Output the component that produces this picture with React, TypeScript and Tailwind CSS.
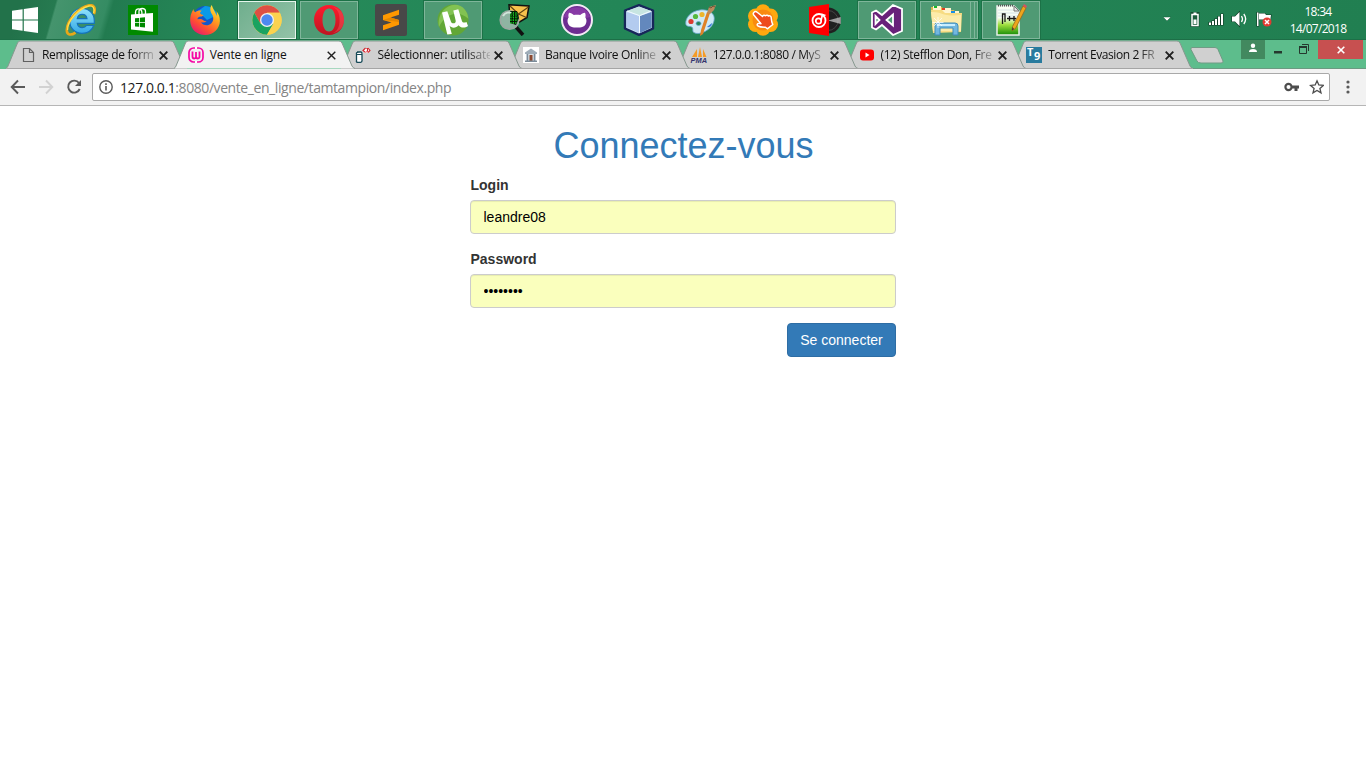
import type { ReactNode } from "react";

const ui = "font-['Open_Sans','Noto_Sans',sans-serif]";

function Icon({ children, size = 32 }: { children: ReactNode; size?: number }) {
  return (
    <svg width={size} height={size} viewBox={`0 0 ${size} ${size}`} className="block shrink-0">
      {children}
    </svg>
  );
}

const WindowsLogo = () => (
  <svg width="28" height="26" viewBox="0 0 28 26" className="block">
    <path d="M1 3.8 11.6 2.3V12.4H1ZM12.8 2.1 27 0V12.4H12.8ZM1 13.6H11.6V23.7L1 22.2ZM12.8 13.6H27V26L12.8 23.9Z" fill="#fff" />
  </svg>
);

const Explorer = () => (
  <Icon>
    <defs>
      <linearGradient id="ie" x1="0" y1="0" x2="0" y2="1"><stop offset="0" stopColor="#8fe2fb" /><stop offset="1" stopColor="#35a9e6" /></linearGradient>
    </defs>
    <path fillRule="evenodd" d="M17 4.500C24.500 4.500 29.300 10 29.300 16.500V19.300H12.300C12.800 22 14.600 23.600 17.300 23.600C19.200 23.600 20.600 22.900 21.500 21.500H28.700C27 26.500 22.500 29.300 17 29.300C9.500 29.300 4.700 24 4.700 17C4.700 10 9.600 4.500 17 4.500ZM12.300 14.700H22C21.700 12 19.900 10.300 17.200 10.300C14.500 10.300 12.700 12 12.300 14.700Z" fill="url(#ie)" stroke="#1673b8" strokeWidth="1.200" />
    <path d="M29 10C31 4 29 .5 24 1.300 14 3 1.500 17 1.800 26.500c.1 4.500 4 5.300 8.700 2.100" fill="none" stroke="#e9a817" strokeWidth="2.600" />
    <path d="M28.600 9C30 4 28 1.300 24 2 14 4.200 2 17 2.500 26" fill="none" stroke="#ffdf4c" strokeWidth="1.300" />
  </Icon>
);

const Store = () => (
  <Icon>
    <path d="M1 1H31V31H1Z" fill="#008a00" />
    <path d="M4 10.500 26 9v18.800L4 25.500Z" fill="#fff" />
    <path d="M8.500 11V8.500a3.200 3.600 0 0 1 6.400 0V10M12 10V7.500c0-4 6.500-4 6.500 0V10" fill="none" stroke="#fff" strokeWidth="1.300" />
    <path d="m8 14.300 4.200-.4v4.100H8Zm5-.5 5-.5v4.700h-5ZM8 18.800h4.200v4L8 22.400Zm5 0h5v4.600l-5-.5Z" fill="#008a00" />
  </Icon>
);

const Firefox = () => (
  <Icon>
    <defs>
      <linearGradient id="ff" x1=".9" y1="0" x2=".2" y2="1">
        <stop offset="0" stopColor="#fff044" /><stop offset=".35" stopColor="#ffa51e" /><stop offset=".7" stopColor="#ff4f32" /><stop offset="1" stopColor="#e31576" />
      </linearGradient>
    </defs>
    <circle cx="16" cy="14.500" r="12.500" fill="#1457c9" />
    <path d="M16 2c6 0 11 4 12.500 9L18 16 9 7Z" fill="#0a9ae8" />
    <path d="M4.500 5C2 9 1 13 1.200 17 1.600 25.500 8 31 16 31s14.700-6 14.900-14c.1-4-1.300-7.500-3.400-9.700.5 2.200.4 3.500.2 4.500C26 7.500 23.500 4 22.700 1c-2.200 3-1.500 6.500.3 9.300 2 3.200 1.600 7-.8 9.200-3.500 3.200-9 1.500-10-1.300 2 .6 3.800.2 5.500-1-2.700.3-4-1.500-5.700-2.200l-3.600.2c.4-1.500 1.500-2.400 3.400-2.600 1.500 0 2.200-.6 2.700-1.500-1.800-.3-3.300-1.300-3.500-2.300l1.600-2.200C9.300 6.500 7.500 7 6.300 8.200 5 7.500 4.600 6.500 4.500 5Z" fill="url(#ff)" />
  </Icon>
);

const Chrome = () => (
  <Icon>
    <circle cx="16" cy="16" r="14.700" fill="#fbd24f" />
    <path d="M3.270 8.650A14.700 14.700 0 0 1 28.730 8.650H16L9.600 19.700Z" fill="#dd4f43" />
    <path d="M3.270 8.650A14.700 14.700 0 0 0 16 30.700L22.400 19.700H9.600Z" fill="#1aa260" />
    <path d="M16 8.650H28.730A14.700 14.700 0 0 1 16 30.700L22.400 19.700Z" fill="#fbd24f" />
    <circle cx="16" cy="16" r="7" fill="#f1f1f1" />
    <circle cx="16" cy="16" r="5.700" fill="#4c89f0" />
  </Icon>
);

const Opera = () => (
  <Icon>
    <defs><linearGradient id="op" x1="0" y1="0" x2="0" y2="1"><stop offset="0" stopColor="#ff1b2d" /><stop offset="1" stopColor="#bd1622" /></linearGradient></defs>
    <path fillRule="evenodd" d="M16 1C7.500 1 1 7.500 1 16s6.500 15 15 15 15-6.500 15-15S24.500 1 16 1Zm0 3.500c4 0 6.500 4.800 6.500 11.500S20 27.500 16 27.500 9.500 22.700 9.500 16 12 4.500 16 4.500Z" fill="url(#op)" />
    <path d="M20 3c5 2 6.500 7 6.500 13S25 27 20 29c6-1 11-6 11-13S26 4 20 3Z" fill="#f25b62" opacity=".45" />
  </Icon>
);

const Sublime = () => (
  <Icon>
    <rect width="32" height="32" rx="2" fill="#484848" />
    <path d="M8 11.200 24 5.800v5L15.500 13.500 24 16v4.800L8 26.200V21.200L16.500 18.500 8 15.900Z" fill="#ff9800" />
    <path d="m8 15.900 7.500-2.400L24 16v2Z" fill="#e58600" />
  </Icon>
);

const Torrent = () => (
  <Icon>
    <circle cx="16" cy="16" r="15.500" fill="#62a736" />
    <path d="M2 23C0 11 8 1 18 .7c8 0 13 7 13.400 14C20 5 8 11 2 23Z" fill="#82c252" />
    <path d="M5 8.500 10.300 7.200 14 17.700c.9 2.600 5.300 2 4.700-.9L16.300 6.500l5-1.300 3.700 12c.5 1.400 2 1.800 4.500.8L31 22c-3 2.200-7.500 2.300-9.300-.7-2.800 3.200-7.400 3-9.200.3l2.300 8.400-4.500.5Z" fill="#fff" />
  </Icon>
);

const MailSearch = () => (
  <Icon>
    <path d="M10 .8 30 2 28 13.500 19 19 11 15Z" fill="#f8c24c" stroke="#111" strokeWidth="1.500" />
    <path d="m11 2 8.500 8L29.500 3M18 18l1.500-8 8 3.500" fill="none" stroke="#614313" strokeWidth="1.200" />
    <path d="m17 23 7 8" stroke="#111" strokeWidth="3.500" />
    <circle cx="10.500" cy="16" r="9.300" fill="#8fb4a2" stroke="#9da8a2" strokeWidth="1.600" />
    <path d="M11 7h7l2 7-3 7-6-2Z" fill="#051b06" />
    <path d="M12 8v11M14.500 8v12M17 8v12M11 10h8M11 13h8M11 16h8M11 19h6" stroke="#19d324" strokeWidth=".9" strokeDasharray="1.500 1" />
    <path d="M4 12c2-4 7-4 8-3" stroke="#d2e5da" fill="none" strokeWidth="2" />
  </Icon>
);

const GitHubDesktop = () => (
  <Icon>
    <circle cx="16" cy="16" r="15" fill="#6d2d91" stroke="#f3eaf5" strokeWidth="2" />
    <path d="M3 13C6 0 26 0 29 13L16 17Z" fill="#873aa5" />
    <path d="M8 8.800c1.900 0 3.600 1.200 4.800 2.100 2.100-.3 4.300-.3 6.400 0 1.200-.9 2.900-2.100 4.800-2.100.7 1.800.8 3 .3 4.500 1.700 2.300 1.400 5 .2 7.200-1.400 2.300-4 2.900-5.500 2.900h-6c-1.500 0-4.100-.6-5.500-2.900-1.200-2.200-1.500-4.900.2-7.200-.5-1.500-.4-2.700.3-4.500Z" fill="#fff" />
  </Icon>
);

const Cube = () => (
  <Icon>
    <path d="M16 1.200 30 6.500v18L16 30.800 2 24.500v-18Z" fill="#cce2f5" stroke="#17265a" strokeWidth="2.400" strokeLinejoin="round" />
    <path d="M4 7 16 2.800 28 7l-11 4Z" fill="#c7e5e1" />
    <path d="m3.500 8 13 4v17l-13-6Z" fill="#b3cbef" />
    <path d="m17 12 11.500-4v15.500L17 29Z" fill="#6388bd" />
    <path d="m4 7 12.500 4.700L28 7M16.500 12v17" fill="none" stroke="#f2fbff" />
  </Icon>
);

const Paint = () => (
  <Icon>
    <path fillRule="evenodd" d="M15 6C6 7 0 14 .8 20c.5 3 4 2 6 3 2 1.500 0 4 2 5.500C14 32 27 26 29 17c2-8-6-12-14-11Zm1 13.500a2.500 2 0 1 1-5 0 2.500 2 0 0 1 5 0Z" fill="#cfeaf6" stroke="#6aa6cc" strokeWidth=".8" />
    <circle cx="6" cy="17.500" r="2.600" fill="#dc3b32" /><circle cx="10.500" cy="12.500" r="2.600" fill="#55b93e" /><circle cx="17" cy="10.500" r="2.600" fill="#edb52c" /><path d="M22 23a4 4 0 0 0 5-4Z" fill="#3478d8" />
    <path d="m25 9-7 21-3 2 1-6 6-18Z" fill="#df8228" />
    <path d="m22 9 2-6 7-2-2 5-4 4Z" fill="#b98b5d" /><path d="m24 3 2 1 2-2 2 1" stroke="#735438" fill="none" />
  </Icon>
);

const Touch = () => (
  <Icon>
    <g fill="#ffa80f"><circle cx="16" cy="7.800" r="7.500" /><circle cx="23.500" cy="12" r="7.500" /><circle cx="23.500" cy="20.500" r="7.500" /><circle cx="16" cy="24.300" r="7.500" /><circle cx="8.500" cy="20.500" r="7.500" /><circle cx="8.500" cy="12" r="7.500" /></g>
    <circle cx="16" cy="16" r="10.500" fill="#f98a10" />
    <path d="M7 8.200c1-1.200 2.500-.5 3.500.3l5 4c.5-1.500 2-1.500 3-.7.800-1 2.300-.8 3 .2 1-.6 2.300 0 2.600 1l.7 5 1 2.500-5.500 4.300-1.800-1.600c-3 .1-5.500-.2-7.500-1.200-1.500-1-.7-2.700 1-2.500l2 .2L6.800 11c-.7-1-.6-2.100.2-2.800Z" fill="#ee4a1c" stroke="#fff" strokeWidth="1.500" strokeLinejoin="round" />
  </Icon>
);

const Vinyl = () => (
  <Icon>
    <circle cx="19" cy="16.500" r="13" fill="#202020" />
    <circle cx="19" cy="16.500" r="10" fill="none" stroke="#444" />
    <path d="m19 16.500 12.800-3.500v7Z" fill="#bbb" opacity=".8" />
    <path d="M0 3 20 0v32L0 29Z" fill="#f00" />
    <circle cx="10" cy="16.500" r="6.500" fill="none" stroke="#fff" strokeWidth="1.800" />
    <circle cx="9.500" cy="17" r="2.700" fill="none" stroke="#fff" strokeWidth="1.700" /><path d="m12 16.500 1.500-6 3 1" fill="none" stroke="#fff" strokeWidth="1.700" />
  </Icon>
);

const VisualStudio = () => (
  <Icon>
    <path fillRule="evenodd" d="M22 1 31 4.800V27l-9 4-11-10-6 4.500-4-2V8.500l4-2 6 4.500ZM22 10.500 15.500 16 22 21.500ZM4.500 12v8L8.500 16Z" fill="#68217a" stroke="#fff" strokeWidth="1.800" />
  </Icon>
);

const Folder = () => (
  <Icon>
    <path d="M1 3h11l2 3h10l2 3h4v18L3 28Z" fill="#e1b94d" />
    <path d="M3 2h8v5H3ZM12 4h9v5h-9ZM21 7h8v4h-8Z" fill="#fff5d0" />
    <path d="M4 2h3v2H4Z" fill="#15b82c" /><path d="M12 4h3v2h-3Z" fill="#e33c22" /><path d="M21 7h4v2h-4Z" fill="#178ee7" />
    <path d="M1 6h11l3 3h17l-1 19-28 1Z" fill="#f7dc83" /><path d="M1 8c10-1 11 5 30 3v16H3Z" fill="#fcebaa" />
    <path d="M5 31V21q0-2 2-2h18q3 0 3 3v9h-5v-7H10v7Z" fill="#72b7df" stroke="#3e8cba" />
    <path d="M7 21h18" stroke="#c7edff" strokeWidth="2" /><path d="M8 13v11M2.500 18.500h11M4 14l8 8m0-8-8 8" stroke="#fff" strokeWidth=".7" />
  </Icon>
);

const Notepad = () => (
  <Icon>
    <defs><linearGradient id="np" x1="0" y1="0" x2="0" y2="1"><stop offset=".4" stopColor="#f8fff4" /><stop offset=".65" stopColor="#9ede3c" /><stop offset="1" stopColor="#168c08" /></linearGradient></defs>
    <path d="M2 2h17l5 5v24H2Z" fill="url(#np)" stroke="#e9eee9" strokeWidth="1.500" />
    <path d="M3 1.500h16" stroke="#555" strokeWidth="2" strokeDasharray="1 1" /><path d="m19 2 5 5h-5Z" fill="#e6e6e6" stroke="#777" />
    <path d="M3 6h15M3 9h20M3 12h20" stroke="#c8d7e3" strokeWidth=".7" />
    <path d="M7.500 20V10H10v8M12 14.500h5M14.500 12v5M17 14.500h4M19 12v5" fill="none" stroke="#181818" strokeWidth="1.300" />
    <path d="M28 2 17.500 22.500l-.5 4 3.500-2L31 4Z" fill="#eea51d" stroke="#946017" strokeWidth=".7" />
    <path d="m28 2 1-2 3 2-1 2Z" fill="#d65261" /><path d="m17.500 23-.5 3.500 2-1.500" fill="#333" />
  </Icon>
);

const apps = [
  { name: "Internet Explorer", icon: <Explorer />, state: "" },
  { name: "Store", icon: <Store />, state: "" },
  { name: "Firefox", icon: <Firefox />, state: "" },
  { name: "Chrome", icon: <Chrome />, state: "active" },
  { name: "Opera", icon: <Opera />, state: "open" },
  { name: "Sublime Text", icon: <Sublime />, state: "" },
  { name: "µTorrent", icon: <Torrent />, state: "open" },
  { name: "Mail", icon: <MailSearch />, state: "" },
  { name: "GitHub", icon: <GitHubDesktop />, state: "" },
  { name: "VirtualBox", icon: <Cube />, state: "" },
  { name: "Paint", icon: <Paint />, state: "" },
  { name: "Touch", icon: <Touch />, state: "" },
  { name: "Music", icon: <Vinyl />, state: "" },
  { name: "Visual Studio", icon: <VisualStudio />, state: "open" },
  { name: "Files", icon: <Folder />, state: "stack" },
  { name: "Notepad++", icon: <Notepad />, state: "open" },
];

const frames: Record<string, string> = {
  "": "",
  active: "border border-[#e5f5ec] bg-[linear-gradient(135deg,#6fae8d,#93c3a8)] outline outline-[#16683f]",
  open: "border border-[#7fb69a] bg-[#4f9a74] outline outline-[#1c7247]",
  stack: "border border-[#7fb69a] bg-[#4f9a74] outline outline-[#1c7247]",
};

function Tray() {
  return (
    <div className="mr-[18px] ml-auto flex h-10 items-center">
      <svg width="112" height="20" viewBox="0 0 112 20" className="mt-[-2px] block">
        <path d="M3 8h8l-4 4Z" fill="#fff" stroke="#155f3b" strokeWidth=".5" />
        <path d="M30.500 3h9v15h-9Z" fill="#123d28" opacity=".75" />
        <path d="M32 5.500h6v11h-6Z" fill="#1c5c3c" stroke="#fff" strokeWidth="1.500" /><path d="M33.500 3.500h3v1.500h-3ZM33.500 10.500h3V15h-3Z" fill="#fff" />
        <g stroke="#123d28" strokeWidth="1.200" paintOrder="stroke" fill="#fff">
          <path d="M49 13.500h2V16h-2ZM52 12h2v4h-2ZM55 10h2v6h-2ZM58 7.500h2V16h-2ZM61 5h2v11h-2Z" />
          <path d="M72 7.500h3l4.500-4.500v14L75 12.500h-3Z" />
          <path d="M97 3.500h1.500V17H97ZM99 4.500h6l1 1.500h5l-1 7h-5l-1-2.500h-5Z" />
        </g>
        <path d="M81.500 7q2 3 0 6M83.800 5q3.700 5 0 10" fill="none" stroke="#fff" strokeWidth="1.300" />
        <circle cx="107" cy="13" r="4.500" fill="#e13b32" /><path d="m105 11 4 4m0-4-4 4" stroke="#fff" strokeWidth="1.500" />
      </svg>
      <div className={`${ui} ml-[16px] w-[60px] pb-px text-center text-[12px] leading-[17px] tracking-[-0.7px] text-white`}>
        <div>18:34</div>
        <div className="whitespace-nowrap">14/07/2018</div>
      </div>
    </div>
  );
}

function Taskbar() {
  return (
    <div className="flex h-10 border-b border-[#1d6f47] bg-[linear-gradient(106deg,#22724a_20px,#267a50_54px,#45946d_56px,#358c63_104px,#227b50_110px,#268a59_230px,#238657_600px,#217f51_1324px)]">
      <div className="flex h-[39px] w-[52px] items-center pl-[11px]">
        <WindowsLogo />
      </div>
      <div className="flex gap-1 pt-px">
        {apps.map((a) => (
          <div key={a.name} title={a.name} className={`flex h-[38px] w-[58px] items-center ${a.state === "stack" ? "" : "justify-center"} ${frames[a.state]}`}>
            {a.state === "stack" ? (
              <>
                <div className="flex h-full w-[50px] items-center justify-center border-r border-[#7fb69a]">{a.icon}</div>
                <div className="h-full w-[4px] border-r border-[#7fb69a]" />
              </>
            ) : (
              a.icon
            )}
          </div>
        ))}
      </div>
      <Tray />
    </div>
  );
}

const tabs = [
  {
    title: "Remplissage de form",
    spacing: "tracking-[-0.32px]",
    icon: <Icon size={16}><path d="M3.500 1.500h6l4 4v9h-10ZM9.500 1.500v4h4" fill="none" stroke="#606060" strokeWidth="1.200" /></Icon>,
  },
  {
    title: "Vente en ligne",
    spacing: "tracking-[-0.18px]",
    icon: <Icon size={16}><rect x="1" y="1" width="14" height="14" rx="4.500" fill="none" stroke="#f509a5" strokeWidth="1.700" /><path d="M4.500 4.500v5q0 2 1.800 2T8 9.500V5v4.500q0 2 1.800 2t1.700-2v-5" fill="none" stroke="#f509a5" strokeWidth="1.800" /><path d="M7 1h2M7 15h2" stroke="#fff" strokeWidth="2" /></Icon>,
  },
  {
    title: "Sélectionner: utilisate",
    spacing: "tracking-[-0.22px]",
    icon: <Icon size={16}><path d="M2 5h4q1 0 1 2v7q0 1.500-3 1.500T1.500 14V7Q1 5 4 5Z" fill="#fff" stroke="#164957" strokeWidth="1.300" /><path d="M2 7.500h5" stroke="#164957" /><path d="M9 2h5v4H9Z" fill="#fff" /><path d="m10.500 1-2.500 2.500 2.500 2M13 1l2 2.500-2 2M11.500 1.500h1v2l-.5 1v1" fill="none" stroke="#d5262f" strokeWidth="1.100" /></Icon>,
  },
  {
    title: "Banque Ivoire Online",
    spacing: "tracking-[-0.35px]",
    icon: <Icon size={16}><path d="M0 0h16v16H0Z" fill="#fff" /><path d="m2 5.500 6-4 6 4v1.500H2Z" fill="#9fadb9" /><path d="M3 7h10v7H3Z" fill="#d4dce2" /><path d="M6.500 8h3v6h-3Z" fill="#8b4931" /><path d="M2 14.300h12M4.500 7v7M11.500 7v7" stroke="#7c8c9a" strokeWidth="1.400" /></Icon>,
  },
  {
    title: "127.0.0.1:8080 / MyS",
    spacing: "tracking-[-0.38px]",
    icon: <svg width="16" height="16" viewBox="0 0 16 16" className="block shrink-0 overflow-visible"><path d="M6 2 1 10h5Zm3-2L7 10h4ZM12 2v8h3.500Z" fill="#f59b27" /><text x="-.5" y="16" textLength="16.500" lengthAdjust="spacingAndGlyphs" className="font-['Liberation_Sans',sans-serif] text-[7px] font-bold italic" fill="#33336d">PMA</text></svg>,
  },
  {
    title: "(12) Stefflon Don, Fre",
    spacing: "tracking-[-0.3px]",
    icon: <Icon size={16}><rect x="1" y="2.500" width="14" height="11" rx="3" fill="#f00" /><path d="m6.500 5.500 4 2.500-4 2.500Z" fill="#fff" /></Icon>,
  },
  {
    title: "Torrent Evasion 2 FR",
    spacing: "tracking-[-0.42px]",
    icon: <Icon size={16}><path d="M0 0h16v16H0Z" fill="#297b9e" /><text x="1" y="9" className="font-['Open_Sans',sans-serif] text-[11px] font-bold" fill="#fff">T</text><text x="8" y="13" className="font-['Open_Sans',sans-serif] text-[11px] font-bold" fill="#fff">9</text></Icon>,
  },
];

const layers = ["z-6", "z-10", "z-5", "z-4", "z-3", "z-2", "z-1"];

function TabStrip() {
  return (
    <div className="isolate flex h-[29px] bg-[#5dbd8c] pl-[6px]">
      {tabs.map((t, i) => {
        const active = i === 1;
        return (
          <div key={t.title} className={`relative -mr-[13.3px] flex h-[29px] w-[181px] shrink-0 items-center pt-px pl-[14px] ${layers[i]}`}>
            <svg width="181" height="29" viewBox="0 0 181 29" className="absolute top-0 left-0">
              <path d="M0 28.500C1 28 1.500 27 2 26L11.500 3Q12.500 1 14 1H165Q167 1 168 3L178 26Q179 28 181 28.500Z" fill={active ? "#f2f2f2" : "#d0d0d0"} />
              <path d="M0 28.500C1 28 1.500 27 2 26L11.500 3Q12.500 1 14 1H165Q167 1 168 3L178 26Q179 28 181 28.500" fill="none" stroke="#87988f" strokeWidth="1" />
              {!active && <path d="M0 28.500H181" stroke="#a5a5a5" />}
            </svg>
            <div className="relative -mt-px">{t.icon}</div>
            <span className={`${ui} relative ml-[6px] w-[113px] text-[12px] leading-4 whitespace-nowrap text-[#111] ${t.spacing} ${active ? "" : "[mask-image:linear-gradient(to_right,#000_80%,rgba(0,0,0,0.15)_100%)]"}`}>
              {t.title}
            </span>
            <svg width="9" height="9" viewBox="0 0 9 9" className="relative ml-[4px] block">
              <path d="m.7.7 7.600 7.600M8.300.7.700 8.300" stroke="#202020" strokeWidth={active ? 1.400 : 1.900} />
            </svg>
          </div>
        );
      })}
      <div className="flex h-[29px] flex-1 border-b border-[#6b9a82] pl-[8px]">
        <svg width="36" height="28" viewBox="0 0 36 28" className="block shrink-0">
          <path d="M4 7.500H27Q29 7.500 30 9.500L35 21Q35.500 23 33 23H13Q10 23 9 21L3 9.500Q2.500 7.500 4 7.500Z" fill="#d0d0d0" stroke="#709c85" />
        </svg>
      </div>
      <div className="flex h-[29px] shrink-0 border-b border-[#6b9a82] pr-[3px]">
        <div className="flex h-[19px] w-6 items-center justify-center bg-[#42895f]">
          <svg width="10" height="10" viewBox="0 0 10 10" className="-mt-[3px]"><circle cx="5" cy="2.700" r="2.200" fill="#fff" /><path d="M1 9q0-3 4-3t4 3Z" fill="#fff" /></svg>
        </div>
        <svg width="53" height="19" viewBox="0 0 53 19" className="block">
          <path d="M9 11h8v2.500H9Z" fill="#25382e" />
          <path d="M34.500 6.500h7v7h-7ZM37 4.500h6.500V11" fill="none" stroke="#25382e" />
          <path d="M34 6h8v2h-8Z" fill="#25382e" />
        </svg>
        <div className="flex h-[19px] w-[45px] items-center justify-center bg-[#c75050]">
          <svg width="8" height="8" viewBox="0 0 8 8"><path d="m.7.7 6.600 6.600M7.300.7.700 7.300" stroke="#fff" strokeWidth="1.600" /></svg>
        </div>
      </div>
    </div>
  );
}

function Toolbar() {
  return (
    <div className="flex h-[37px] items-center border-b border-[#b6b6b6] bg-[#f2f2f2] pr-[13px] pl-[10px]">
      <svg width="74" height="16" viewBox="0 0 74 16" className="block shrink-0">
        <path d="M15 8H2M8 1.500 1.700 8 8 14.500" fill="none" stroke="#5a5a5a" strokeWidth="1.900" />
        <path d="M29 8h13M36 1.500 42.300 8 36 14.500" fill="none" stroke="#d2d2d2" strokeWidth="1.900" />
        <path d="M69 4A6 6 0 1 0 69.700 10" fill="none" stroke="#5a5a5a" strokeWidth="1.900" /><path d="M71 1v6h-6Z" fill="#5a5a5a" />
      </svg>
      <div className="ml-[8px] flex h-7 w-[1238px] items-center rounded-[2px] border border-[#a9a9a9] bg-white pr-[5px] pl-[6px]">
        <svg width="14" height="14" viewBox="0 0 14 14"><circle cx="7" cy="7" r="6.200" fill="none" stroke="#5a5a5a" strokeWidth="1.400" /><path d="M6.200 6h1.600v4.500H6.200ZM6.200 3.300h1.600v1.600H6.200Z" fill="#5a5a5a" /></svg>
        <div className={`${ui} ml-[7px] pt-px text-[14px] leading-5 tracking-[-0.42px] text-[#858585]`}>
          <span className="text-[#1c1c1c]">127.0.0.1</span>:8080/vente_en_ligne/tamtampion/index.php
        </div>
        <svg width="40" height="16" viewBox="0 0 40 16" className="ml-auto block">
          <path fillRule="evenodd" d="M4.500 3.800c2 0 3.400 1.200 3.900 2.700H15v3h-1.500V12h-3V9.500H8.400c-.5 1.500-2 2.700-3.900 2.700a4.200 4.200 0 0 1 0-8.400Zm0 2.200a2 2 0 1 0 0 4 2 2 0 0 0 0-4Z" fill="#4d4d4d" />
          <path d="m33 1.800 1.800 4.200 4.600.4-3.500 3 1.100 4.500-4-2.400-4 2.400 1.100-4.500-3.500-3 4.600-.4Z" fill="none" stroke="#4d4d4d" strokeWidth="1.300" />
        </svg>
      </div>
      <svg width="4" height="14" viewBox="0 0 4 14" className="mr-[3px] ml-auto block"><g fill="#5a5a5a"><circle cx="2" cy="2" r="1.600" /><circle cx="2" cy="7" r="1.600" /><circle cx="2" cy="12" r="1.600" /></g></svg>
    </div>
  );
}

const field =
  "block h-[34px] w-full rounded-[4px] border border-[#ccc] bg-[#faffbd] pr-3 pl-[12.5px] py-[6px] text-[14px] leading-5 text-black shadow-[inset_0_1px_1px_rgba(0,0,0,0.075)] outline-none";

function LoginForm() {
  return (
    <main className="flex justify-center font-['Liberation_Sans',Arial,sans-serif] text-[14px] leading-5 text-[#333]">
      <form className="w-[426px] pt-5">
        <h1 className="mb-[10px] pl-px text-center text-[36px] leading-[39px] font-normal text-[#337ab7]">Connectez-vous</h1>
        <label className="mb-[5px] block pl-[0.5px] font-bold" htmlFor="login">Login</label>
        <input id="login" className={field} defaultValue="leandre08" />
        <label className="mt-[15px] mb-[5px] block pl-[0.5px] font-bold" htmlFor="password">Password</label>
        <input id="password" type="password" className={field} defaultValue="leandre8" />
        <div className="mt-[15px] flex justify-end">
          <button type="button" className="h-[34px] w-[109px] rounded-[4px] border border-[#2e6da4] bg-[#337ab7] text-white">Se connecter</button>
        </div>
      </form>
    </main>
  );
}

export default function App() {
  return (
    <div className="h-[768px] w-[1366px] overflow-hidden bg-white">
      <Taskbar />
      <TabStrip />
      <Toolbar />
      <LoginForm />
    </div>
  );
}
